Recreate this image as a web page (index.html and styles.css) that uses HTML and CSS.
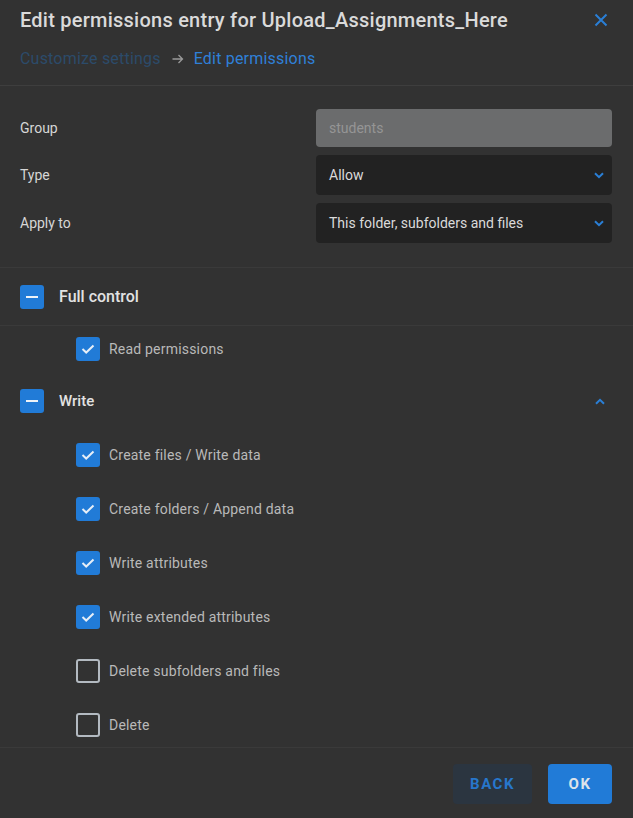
FILE: index.html
```html
<!DOCTYPE html>
<html lang="en">
<head>
<meta charset="utf-8">
<title>Edit permissions</title>
<link rel="stylesheet" href="styles.css">
</head>
<body>
<div class="dialog">
  <header class="header">
    <div class="title-row">
      <h1 class="title">Edit permissions entry for Upload_Assignments_Here</h1>
      <button class="close" aria-label="Close">
        <svg width="14" height="14" viewBox="0 0 14 14"><path d="M1.5 1.5 L12.5 12.5 M12.5 1.5 L1.5 12.5" stroke="#2a7fd6" stroke-width="2" fill="none"/></svg>
      </button>
    </div>
    <nav class="crumbs">
      <span class="crumb-prev">Customize settings</span>
      <svg class="crumb-arrow" width="12" height="10" viewBox="0 0 12 10"><path d="M0.5 5 H10.5 M6.5 1 L10.5 5 L6.5 9" stroke="#9a9a9a" stroke-width="1.3" fill="none"/></svg>
      <span class="crumb-cur">Edit permissions</span>
    </nav>
  </header>

  <section class="form">
    <label class="label">Group</label>
    <div class="input disabled">students</div>
    <label class="label">Type</label>
    <div class="input select">Allow
      <svg class="chev" width="10" height="7" viewBox="0 0 10 7"><path d="M1 1.2 L5 5.2 L9 1.2" stroke="#2a7fd6" stroke-width="2" fill="none"/></svg>
    </div>
    <label class="label">Apply to</label>
    <div class="input select">This folder, subfolders and files
      <svg class="chev" width="10" height="7" viewBox="0 0 10 7"><path d="M1 1.2 L5 5.2 L9 1.2" stroke="#2a7fd6" stroke-width="2" fill="none"/></svg>
    </div>
  </section>

  <section class="perms">
    <div class="group-head">
      <span class="cb on"><span class="minus"></span></span>
      <span class="group-label">Full control</span>
    </div>
    <div class="items">
      <div class="item first">
        <span class="cb on"><svg width="14" height="10" viewBox="0 0 14 10"><path d="M1.5 5 L5.2 8.5 L12.5 1.5" stroke="#e6eef7" stroke-width="2" fill="none"/></svg></span>
        <span class="item-label">Read permissions</span>
      </div>
      <div class="item head">
        <span class="cb on"><span class="minus"></span></span>
        <span class="group-label">Write</span>
        <svg class="chev-up" width="10" height="7" viewBox="0 0 10 7"><path d="M1 5.8 L5 1.8 L9 5.8" stroke="#2a7fd6" stroke-width="2" fill="none"/></svg>
      </div>
      <div class="item">
        <span class="cb on"><svg width="14" height="10" viewBox="0 0 14 10"><path d="M1.5 5 L5.2 8.5 L12.5 1.5" stroke="#e6eef7" stroke-width="2" fill="none"/></svg></span>
        <span class="item-label">Create files / Write data</span>
      </div>
      <div class="item">
        <span class="cb on"><svg width="14" height="10" viewBox="0 0 14 10"><path d="M1.5 5 L5.2 8.5 L12.5 1.5" stroke="#e6eef7" stroke-width="2" fill="none"/></svg></span>
        <span class="item-label">Create folders / Append data</span>
      </div>
      <div class="item">
        <span class="cb on"><svg width="14" height="10" viewBox="0 0 14 10"><path d="M1.5 5 L5.2 8.5 L12.5 1.5" stroke="#e6eef7" stroke-width="2" fill="none"/></svg></span>
        <span class="item-label">Write attributes</span>
      </div>
      <div class="item">
        <span class="cb on"><svg width="14" height="10" viewBox="0 0 14 10"><path d="M1.5 5 L5.2 8.5 L12.5 1.5" stroke="#e6eef7" stroke-width="2" fill="none"/></svg></span>
        <span class="item-label">Write extended attributes</span>
      </div>
      <div class="item">
        <span class="cb off"></span>
        <span class="item-label">Delete subfolders and files</span>
      </div>
      <div class="item">
        <span class="cb off"></span>
        <span class="item-label">Delete</span>
      </div>
    </div>
  </section>

  <footer class="footer">
    <button class="btn back">BACK</button>
    <button class="btn ok">OK</button>
  </footer>
</div>
</body>
</html>
```

FILE: styles.css
```css
* { box-sizing: border-box; }
html, body { margin: 0; padding: 0; }
body {
  background: #323232;
  font-family: Roboto, "Liberation Sans", sans-serif;
  color: #dcdcdc;
}
.dialog {
  display: flex;
  flex-direction: column;
  height: 818px;
  width: 633px;
}
.header {
  padding: 8px 21px 16px 20px;
  border-bottom: 1px solid #3e3e3e;
}
.title-row {
  display: flex;
  align-items: center;
  justify-content: space-between;
  height: 24px;
}
.title {
  margin: 0;
  font-size: 20px;
  font-weight: 500;
  letter-spacing: 0.24px;
  line-height: 24px;
  color: #dadada;
}
.close {
  background: none;
  border: 0;
  padding: 0;
  margin-right: 4px;
  width: 14px;
  height: 14px;
  display: flex;
}
.crumbs {
  margin-top: 17px;
  display: flex;
  align-items: center;
  height: 20px;
  font-size: 16px;
  letter-spacing: 0.2px;
  line-height: 20px;
}
.crumb-prev { color: #2c4b6a; }
.crumb-arrow { margin: 0 10px 0 11px; }
.crumb-cur { color: #2f80d8; }

.form {
  display: grid;
  grid-template-columns: 1fr 296px;
  grid-auto-rows: auto;
  row-gap: 8px;
  align-items: center;
  padding: 23px 21px 24px 20px;
  border-bottom: 1px solid #3a3a3a;
}
.label {
  font-size: 14px;
  line-height: 16px;
  margin-top: -1px;
  color: #d6d6d6;
}
.input {
  height: 40px;
  border-radius: 4px;
  padding: 0 13px;
  font-size: 14px;
  display: flex;
  align-items: center;
  justify-content: space-between;
}
.input.disabled {
  height: 38px;
  background: #6b6c6d;
  color: #959595;
}
.input.select {
  background: #222222;
  color: #dadada;
  padding-right: 8px;
}

.perms {
  flex: 1;
  overflow: hidden;
  border-bottom: 1px solid #3a3a3a;
}
.group-head {
  display: flex;
  align-items: center;
  height: 58px;
  padding: 0 20px;
  border-bottom: 1px solid #3a3a3a;
}
.group-label {
  margin-left: 15px;
  font-size: 15px;
  font-weight: 500;
  color: #e2e2e2;
}
.group-head .group-label { font-size: 16px; }
.items {
  display: flex;
  flex-direction: column;
  gap: 30px;
  padding-top: 11px;
}
.item {
  display: flex;
  align-items: center;
  height: 24px;
  padding-left: 76px;
}
.item.first { margin-bottom: -2px; }
.item.head {
  padding-left: 20px;
  padding-right: 28px;
}
.chev-up { margin-left: auto; }
.item-label {
  margin-left: 9px;
  font-size: 14px;
  letter-spacing: 0.2px;
  color: #b9b9b9;
}
.cb {
  width: 24px;
  height: 24px;
  border-radius: 3px;
  display: flex;
  align-items: center;
  justify-content: center;
  flex: none;
}
.cb.on { background: #217bd7; }
.cb.off { border: 2px solid #b3bac1; }
.minus {
  width: 12px;
  height: 2px;
  background: #eef3f8;
}

.footer {
  height: 70px;
  display: flex;
  justify-content: flex-end;
  align-items: flex-start;
  gap: 16px;
  padding: 16px 21px 0 0;
}
.btn {
  height: 40px;
  border: 0;
  border-radius: 4px;
  font-family: Roboto, "Liberation Sans", sans-serif;
  font-size: 15px;
  font-weight: 700;
  letter-spacing: 1.5px;
  padding: 0;
}
.btn.back {
  width: 79px;
  background: #2b3540;
  color: #2777cc;
}
.btn.ok {
  width: 64px;
  background: #217bd7;
  color: #dde3ea;
}
```
